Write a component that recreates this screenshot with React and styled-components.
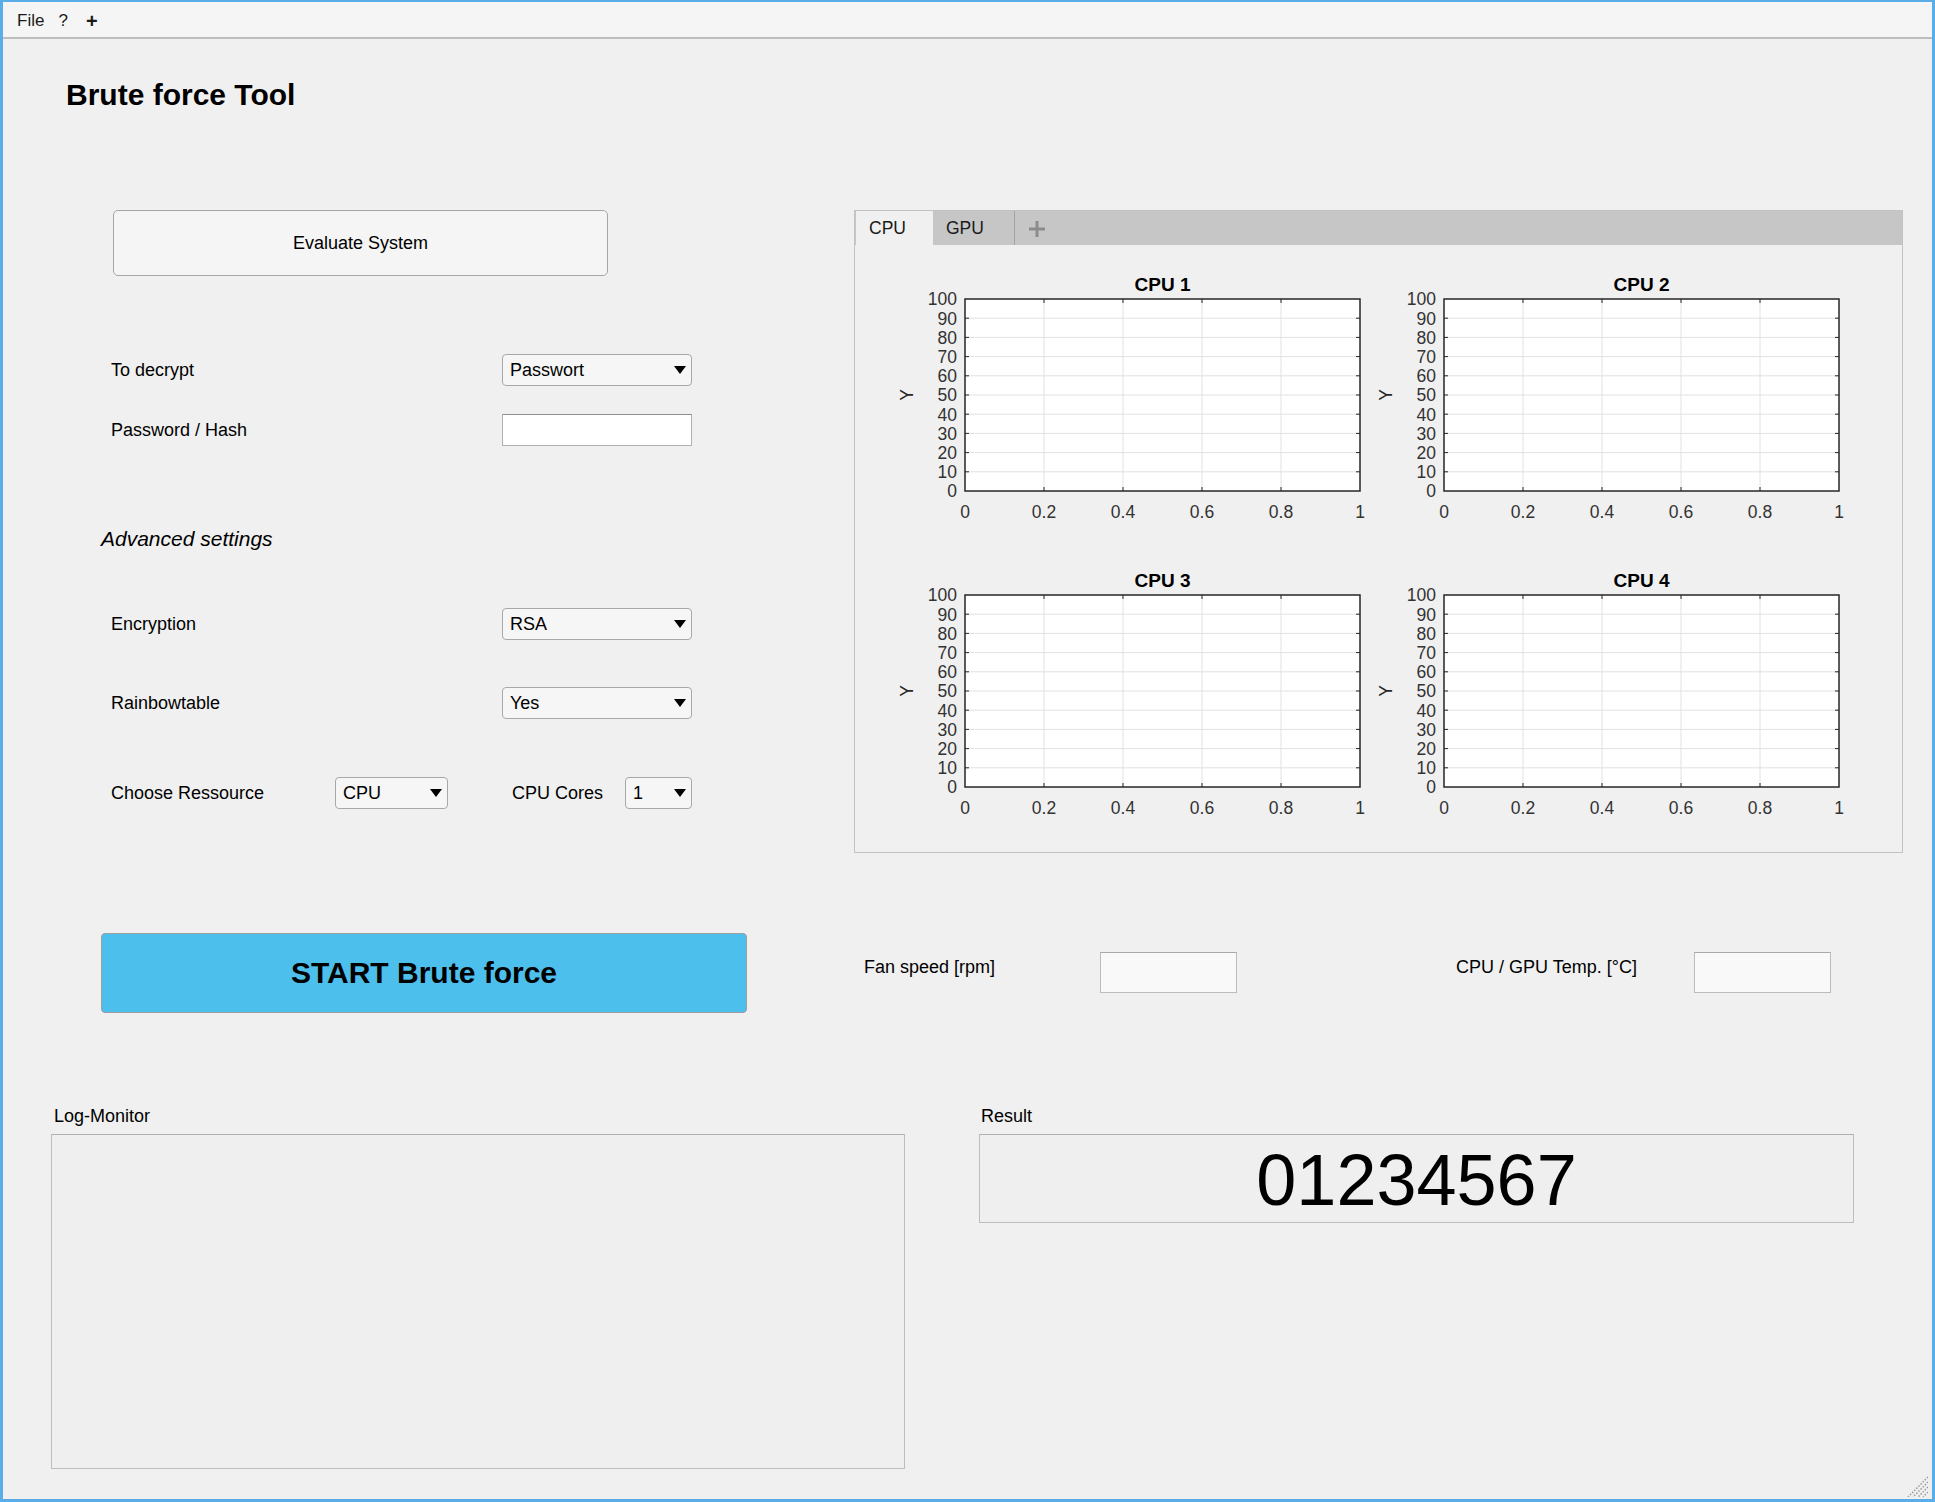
import React from 'react';
import styled, { createGlobalStyle } from 'styled-components';

const GlobalStyle = createGlobalStyle`
  html, body {
    margin: 0;
    padding: 0;
    background: #f0f0f0;
  }
  body {
    font-family: "Liberation Sans", Arial, sans-serif;
    color: #000;
  }
  * {
    box-sizing: border-box;
  }
`;

const Window = styled.div`
  position: relative;
  width: 1935px;
  height: 1502px;
  border: 3px solid #5aade6;
  border-top-width: 2px;
  background: #f0f0f0;
  overflow: hidden;
`;

const MenuBar = styled.div`
  display: flex;
  align-items: center;
  height: 37px;
  padding: 2px 0 0 14px;
  background: #f5f5f5;
  border-bottom: 2px solid #bdbdbd;
  font-size: 17px;
  color: #1a1a1a;
`;

const MenuItem = styled.span`
  margin-right: ${(p) => p.$gap || 0}px;
  font-weight: ${(p) => (p.$bold ? 700 : 400)};
  font-size: ${(p) => (p.$bold ? 20 : 17)}px;
  line-height: 20px;
`;

const Title = styled.h1`
  margin: 41px 0 0 63px;
  height: 30px;
  font-size: 30px;
  line-height: 30px;
  font-weight: 700;
`;

const TopSection = styled.div`
  display: flex;
  gap: 107px;
  margin-top: 100px;
  padding-left: 98px;
`;

const LeftColumn = styled.div`
  display: flex;
  flex-direction: column;
  width: 646px;
`;

const RightColumn = styled.div`
  display: flex;
  flex-direction: column;
  width: 1049px;
`;

const EvalButton = styled.div`
  display: flex;
  align-items: center;
  justify-content: center;
  margin-left: 12px;
  width: 495px;
  height: 66px;
  background: #f5f5f5;
  border: 1px solid #a6a6a6;
  border-radius: 5px;
  font-size: 18px;
`;

const FormRow = styled.div`
  display: flex;
  align-items: center;
  height: 32px;
  margin-top: ${(p) => p.$top}px;
  padding-left: 10px;
`;

const Label = styled.span`
  flex: 0 0 ${(p) => p.$w}px;
  margin-left: ${(p) => p.$ml || 0}px;
  font-size: 18px;
  line-height: 20px;
`;

const SelectBox = styled.div`
  display: flex;
  align-items: center;
  justify-content: space-between;
  flex: 0 0 ${(p) => p.$w}px;
  height: 32px;
  padding: 0 5px 0 7px;
  background: #f6f6f6;
  border: 1px solid #a8a8a8;
  border-radius: 4px;
  font-size: 18px;
`;

const TextInput = styled.div`
  flex: 0 0 190px;
  height: 32px;
  background: #fff;
  border: 1px solid #b0b0b0;
  border-top-color: #8f8f8f;
`;

const SectionHeading = styled.div`
  margin-top: 81px;
  height: 24px;
  line-height: 24px;
  font-size: 21px;
  font-style: italic;
`;

const StartButton = styled.div`
  display: flex;
  align-items: center;
  justify-content: center;
  margin-top: 124px;
  height: 80px;
  background: #4dbfec;
  border: 1px solid #9e9e9e;
  border-radius: 4px;
  font-size: 30px;
  font-weight: 700;
`;

const TabPanel = styled.div`
  display: flex;
  flex-direction: column;
  height: 643px;
  border: 1px solid #c2c2c2;
`;

const TabStrip = styled.div`
  display: flex;
  flex-shrink: 0;
  align-items: stretch;
  height: 34px;
  background: #c6c6c6;
`;

const Tab = styled.div`
  display: flex;
  align-items: center;
  width: ${(p) => p.$w}px;
  margin-left: ${(p) => (p.$active ? 1 : 0)}px;
  padding: 1px 0 0 13px;
  font-size: 17.5px;
  background: ${(p) => (p.$active ? '#f0f0f0' : 'transparent')};
  border-right: ${(p) => (p.$active ? 'none' : '1px solid #a4a4a4')};
  color: #1a1a1a;
`;

const AddTab = styled.div`
  display: flex;
  align-items: center;
  padding: 1px 0 0 14px;
`;

const ChartGrid = styled.div`
  display: grid;
  flex-shrink: 0;
  grid-template-columns: 479px 479px;
  grid-template-rows: 270px 270px;
  row-gap: 26px;
  padding: 17px 0 0 35px;
`;

const ChartSvg = styled.svg`
  display: block;
  font-family: "Liberation Sans", Arial, sans-serif;
  overflow: visible;
`;

const FanRow = styled.div`
  display: flex;
  align-items: flex-start;
  margin-top: 99px;
  padding-left: 10px;
  height: 41px;
`;

const FanLabel = styled.span`
  flex: 0 0 ${(p) => p.$w}px;
  margin-left: ${(p) => p.$ml || 0}px;
  height: 30px;
  line-height: 30px;
  font-size: 18px;
`;

const ValueBox = styled.div`
  flex: 0 0 137px;
  height: 41px;
  background: #f9f9f9;
  border: 1px solid #bcbcbc;
  border-top-color: #a9a9a9;
`;

const BottomSection = styled.div`
  display: flex;
  gap: 74px;
  margin-top: 91px;
  padding-left: 48px;
`;

const Field = styled.div`
  display: flex;
  flex-direction: column;
  width: ${(p) => p.$w}px;
`;

const FieldLabel = styled.div`
  height: 24px;
  line-height: 24px;
  margin-bottom: 6px;
  padding-left: ${(p) => p.$pl || 0}px;
  font-size: 18px;
`;

const Panel = styled.div`
  display: flex;
  align-items: center;
  justify-content: center;
  height: ${(p) => p.$h}px;
  background: #efefef;
  border: 1px solid #bdbdbd;
  border-top-color: #b0b0b0;
`;

const ResultText = styled.span`
  font-size: 72px;
  line-height: 72px;
  padding-top: 3px;
`;

const Grip = styled.svg`
  position: absolute;
  right: 4px;
  bottom: 2px;
`;

const Arrow = () => (
  <svg width="12" height="8" viewBox="0 0 12 8">
    <polygon points="0,0 12,0 6,8" fill="#000" />
  </svg>
);

const Select = ({ w, value }) => (
  <SelectBox $w={w}>
    <span>{value}</span>
    <Arrow />
  </SelectBox>
);

const Chart = ({ title }) => {
  const px = 75;
  const py = 37;
  const pw = 395;
  const ph = 192;
  const yVals = [100, 90, 80, 70, 60, 50, 40, 30, 20, 10, 0];
  const xVals = ['0', '0.2', '0.4', '0.6', '0.8', '1'];
  const tick = 4;
  return (
    <ChartSvg width="479" height="270">
      <text x={px + pw / 2} y={29} textAnchor="middle" fontWeight="700" fontSize="19" fill="#000">
        {title}
      </text>
      <rect x={px} y={py} width={pw} height={ph} fill="#fff" />
      {yVals.slice(1, -1).map((v, i) => {
        const y = py + ((i + 1) * ph) / 10;
        return <line key={v} x1={px} x2={px + pw} y1={y} y2={y} stroke="#e2e2e2" strokeWidth="1" />;
      })}
      {xVals.slice(1, -1).map((v, i) => {
        const x = px + ((i + 1) * pw) / 5;
        return <line key={v} x1={x} x2={x} y1={py} y2={py + ph} stroke="#e2e2e2" strokeWidth="1" />;
      })}
      {yVals.slice(1, -1).map((v, i) => {
        const y = py + ((i + 1) * ph) / 10;
        return (
          <g key={'t' + v} stroke="#262626" strokeWidth="1">
            <line x1={px} x2={px + tick} y1={y} y2={y} />
            <line x1={px + pw - tick} x2={px + pw} y1={y} y2={y} />
          </g>
        );
      })}
      {xVals.slice(1, -1).map((v, i) => {
        const x = px + ((i + 1) * pw) / 5;
        return (
          <g key={'t' + v} stroke="#262626" strokeWidth="1">
            <line x1={x} x2={x} y1={py} y2={py + tick} />
            <line x1={x} x2={x} y1={py + ph - tick} y2={py + ph} />
          </g>
        );
      })}
      <rect x={px} y={py} width={pw} height={ph} fill="none" stroke="#262626" strokeWidth="1.5" />
      {yVals.map((v, i) => (
        <text key={'yl' + v} x={px - 8} y={py + (i * ph) / 10 + 6.3} textAnchor="end" fontSize="17.5" fill="#333">
          {v}
        </text>
      ))}
      {xVals.map((v, i) => (
        <text key={'xl' + v} x={px + (i * pw) / 5} y={256} textAnchor="middle" fontSize="17.5" fill="#333">
          {v}
        </text>
      ))}
      <text
        transform={`translate(17 ${py + ph / 2}) rotate(-90)`}
        textAnchor="middle"
        dominantBaseline="central"
        fontSize="17.5"
        fill="#262626"
      >
        Y
      </text>
    </ChartSvg>
  );
};

export default function App() {
  return (
    <>
      <GlobalStyle />
      <Window>
        <MenuBar>
          <MenuItem $gap={14}>File</MenuItem>
          <MenuItem $gap={18}>?</MenuItem>
          <MenuItem $bold>+</MenuItem>
        </MenuBar>

        <Title>Brute force Tool</Title>

        <TopSection>
          <LeftColumn>
            <EvalButton>Evaluate System</EvalButton>

            <FormRow $top={78}>
              <Label $w={391}>To decrypt</Label>
              <Select w={190} value="Passwort" />
            </FormRow>
            <FormRow $top={28}>
              <Label $w={391}>Password / Hash</Label>
              <TextInput />
            </FormRow>

            <SectionHeading>Advanced settings</SectionHeading>

            <FormRow $top={57}>
              <Label $w={391}>Encryption</Label>
              <Select w={190} value="RSA" />
            </FormRow>
            <FormRow $top={47}>
              <Label $w={391}>Rainbowtable</Label>
              <Select w={190} value="Yes" />
            </FormRow>
            <FormRow $top={58}>
              <Label $w={224}>Choose Ressource</Label>
              <Select w={113} value="CPU" />
              <Label $w={113} $ml={64}>CPU Cores</Label>
              <Select w={67} value="1" />
            </FormRow>

            <StartButton>START Brute force</StartButton>
          </LeftColumn>

          <RightColumn>
            <TabPanel>
              <TabStrip>
                <Tab $active $w={77}>CPU</Tab>
                <Tab $w={82}>GPU</Tab>
                <AddTab>
                  <svg width="16" height="16" viewBox="0 0 16 16">
                    <rect x="6.5" y="0" width="3" height="16" fill="#8c8c8c" />
                    <rect x="0" y="6.5" width="16" height="3" fill="#8c8c8c" />
                  </svg>
                </AddTab>
              </TabStrip>
              <ChartGrid>
                <Chart title="CPU 1" />
                <Chart title="CPU 2" />
                <Chart title="CPU 3" />
                <Chart title="CPU 4" />
              </ChartGrid>
            </TabPanel>

            <FanRow>
              <FanLabel $w={236}>Fan speed [rpm]</FanLabel>
              <ValueBox />
              <FanLabel $w={238} $ml={219}>CPU / GPU Temp. [°C]</FanLabel>
              <ValueBox />
            </FanRow>
          </RightColumn>
        </TopSection>

        <BottomSection>
          <Field $w={854}>
            <FieldLabel $pl={3}>Log-Monitor</FieldLabel>
            <Panel $h={335} />
          </Field>
          <Field $w={875}>
            <FieldLabel $pl={2}>Result</FieldLabel>
            <Panel $h={89}>
              <ResultText>01234567</ResultText>
            </Panel>
          </Field>
        </BottomSection>

        <Grip width="22" height="22" viewBox="0 0 22 22">
          {[0, 5, 10, 15].map((o) => (
            <line
              key={o}
              x1={22}
              y1={o + 2}
              x2={o + 2}
              y2={22}
              stroke="#9a9a9a"
              strokeWidth="1.5"
              strokeDasharray="1.5 1.5"
            />
          ))}
        </Grip>
      </Window>
    </>
  );
}
